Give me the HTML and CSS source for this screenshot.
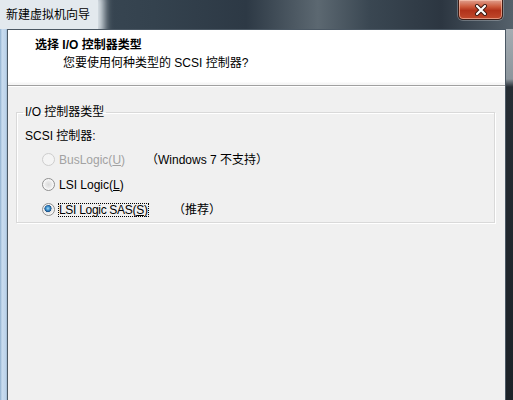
FILE: index.html
```html
<!DOCTYPE html>
<html lang="zh-CN">

<head>
    <meta charset="UTF-8">
    <meta name="viewport" content="width=device-width, initial-scale=1.0">
    <title>新建虚拟机向导</title>
    <link rel="stylesheet" href="styles.css">
</head>

<body>
    <div class="window">
        <div class="titlebar">
            <span class="title_text">新建虚拟机向导</span>
            <div class="close_btn">
                <svg width="14" height="12" viewBox="0 0 14 12">
                    <path d="M3 2 L11 10 M11 2 L3 10" stroke="#3a1810" stroke-width="4" stroke-linecap="round" fill="none"/>
                    <path d="M3 2 L11 10 M11 2 L3 10" stroke="#ffffff" stroke-width="2.2" stroke-linecap="round" fill="none"/>
                </svg>
            </div>
        </div>

        <div class="frame">
            <div class="frame_left"></div>
            <div class="client">
                <div class="header">
                    <p class="header_title">选择 I/O 控制器类型</p>
                    <p class="header_sub">您要使用何种类型的 SCSI 控制器?</p>
                </div>

                <div class="page_body">
                    <fieldset class="group">
                        <legend>I/O 控制器类型</legend>
                        <p class="group_label">SCSI 控制器:</p>

                        <div class="radio_row disabled">
                            <span class="radio"></span>
                            <span class="radio_text w_bus">BusLogic(<u>U</u>)</span>
                            <span class="note">（Windows 7 不支持）</span>
                        </div>
                        <div class="radio_row">
                            <span class="radio"></span>
                            <span class="radio_text">LSI Logic(<u>L</u>)</span>
                        </div>
                        <div class="radio_row">
                            <span class="radio checked"></span>
                            <span class="radio_text w_sas"><span class="focus">LSI Logic SAS(<u>S</u>)</span></span>
                            <span class="note">（推荐）</span>
                        </div>
                    </fieldset>
                </div>
            </div>
            <div class="frame_right"></div>
        </div>
    </div>
</body>

</html>
```

FILE: styles.css
```css
* {
    margin: 0;
    padding: 0;
    box-sizing: border-box;
}

body {
    font-family: "Liberation Sans", "Noto Sans CJK SC", sans-serif;
    font-size: 12px;
    color: #000;
    background: #2b333a;
}

.window {
    display: flex;
    flex-direction: column;
    width: 513px;
    height: 400px;
}

/* title bar */
.titlebar {
    display: flex;
    justify-content: space-between;
    align-items: flex-start;
    height: 29px;
    background: linear-gradient(90deg, #3e4c58 0, #34424e 30%, #2d3945 48%, #5c6871 62%, #3a4752 72%, #2c3641 86%, #55616b 100%);
    overflow: hidden;
}

.title_text {
    display: block;
    height: 29px;
    padding: 6px 8px 0 6px;
    line-height: 18px;
    background: #e3e9ee;
    box-shadow: 0 0 8px 6px #dfe6ec;
    color: #000;
}

.close_btn {
    display: flex;
    justify-content: center;
    align-items: center;
    width: 45px;
    height: 20px;
    margin-right: 10px;
    border: 1px solid #3f1d16;
    border-top: none;
    border-radius: 0 0 5px 5px;
    background: linear-gradient(180deg, #e0a08f 0, #cc5a3c 35%, #b1321a 55%, #c0492c 100%);
    box-shadow: inset 0 0 0 1px rgba(255, 210, 190, 0.55), 0 0 0 1px rgba(255, 255, 255, 0.25);
}

/* frame and client */
.frame {
    display: flex;
    flex: 1;
}

.frame_left {
    width: 7px;
    background: linear-gradient(90deg, #8fb0cf 0, #c9dcef 30%, #bcd3ea 80%, #9fb8d0 100%);
}

.frame_right {
    width: 7px;
    background: linear-gradient(180deg, #a4acb2 0, #8c959c 50px, #262d34 58px, #1c2228 100%);
}

.client {
    flex: 1;
    display: flex;
    flex-direction: column;
    border: 1px solid #4b5864;
    border-bottom: none;
    background: #f0f0f0;
}

.header {
    height: 56px;
    padding: 6px 0 0 27px;
    line-height: 18px;
    background: linear-gradient(180deg, #fff 0, #fff 52px, #f6f6f6 53px);
    border-bottom: 1px solid #a0a0a0;
    box-shadow: 0 1px 0 #fff;
}

.header_title {
    font-weight: bold;
}

.header_sub {
    margin-left: 28px;
}

.page_body {
    padding: 17px 10px 0 8px;
}

/* group box */
.group {
    padding: 0 8px;
    border: 1px solid #d9d9d9;
    box-shadow: inset 1px 1px 0 #fff, 1px 1px 0 #fff;
    line-height: 18px;
}

.group legend {
    margin-left: -2px;
    padding: 0 2px;
}

.group_label {
    margin-top: 6px;
}

.radio_row {
    display: flex;
    align-items: center;
    height: 25px;
    padding-left: 17px;
}

.radio_row:first-of-type {
    margin-top: 2px;
}

.radio {
    width: 13px;
    height: 13px;
    margin-right: 4px;
    border: 1px solid #8f8f8f;
    border-radius: 50%;
    background: radial-gradient(circle at 50% 50%, #d9d9d9 0, #ececec 45%, #fafafa 70%);
    box-shadow: inset 0 0 0 1px #f7f7f7;
}

.radio.checked {
    background: radial-gradient(circle at 45% 40%, #a8dcf6 0, #3d8fcb 22%, #1a4f86 38%, #e2e2e2 42%, #f4f4f4 75%);
}

.disabled .radio {
    border-color: #cdcdcd;
    background: #f4f4f4;
    box-shadow: none;
}

.disabled {
    color: #a2a2a2;
}

.disabled .note {
    color: #000;
}

.radio_text {
    display: inline-block;
}

.w_bus {
    width: 87px;
}

.w_sas {
    width: 114px;
}

.focus {
    padding: 0 1px;
    margin-left: -1px;
    outline: 1px dotted #000;
    outline-offset: -1px;
    letter-spacing: -0.3px;
}
```
